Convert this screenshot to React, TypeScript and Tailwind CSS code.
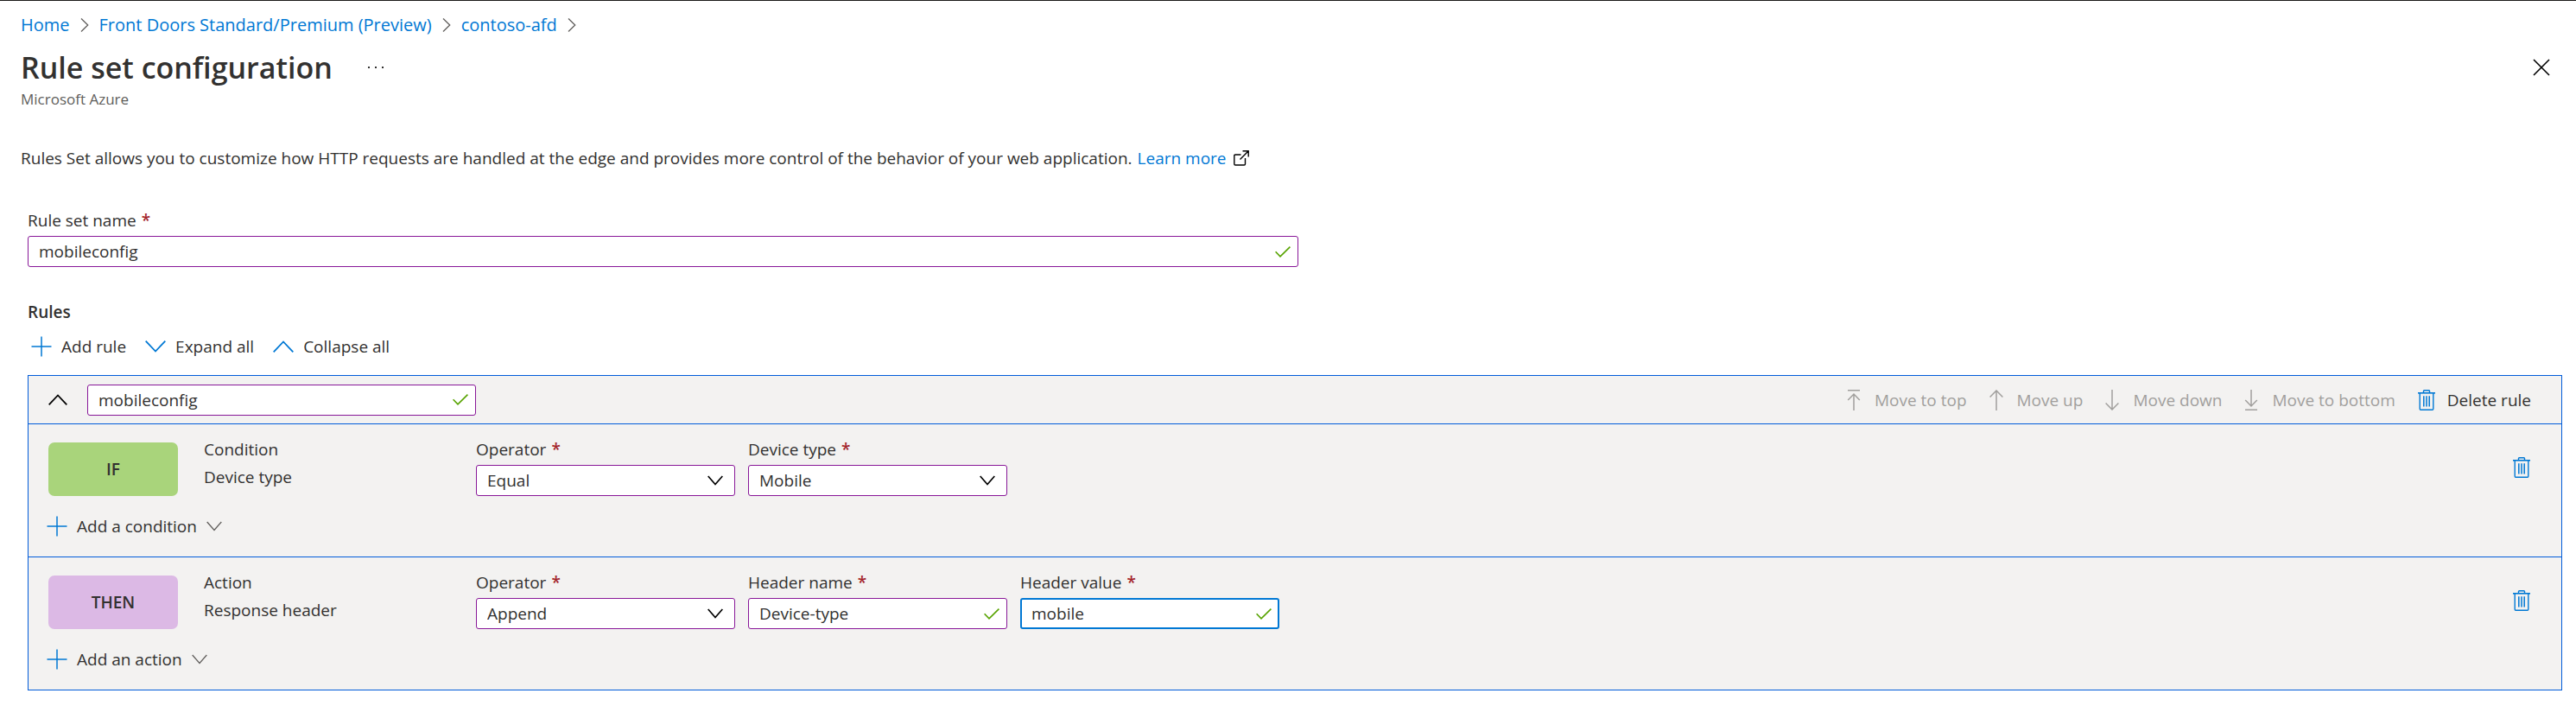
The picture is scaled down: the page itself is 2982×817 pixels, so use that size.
import React from "react";

const S = (p: { d: string; w: number; h: number; c: string; sw?: number }) => (
  <svg width={p.w} height={p.h} viewBox={`0 0 ${p.w} ${p.h}`} fill="none" className={`shrink-0 ${p.c}`} aria-hidden="true">
    <path d={p.d} stroke="currentColor" strokeWidth={p.sw ?? 1.5} />
  </svg>
);

const BLUE = "text-[#0078d4]";
const Plus = () => <S w={24} h={24} d="M12 0.5V23.5M0.5 12H23.5" c={BLUE} />;
const Down = ({ c }: { c: string }) => <S w={24} h={14} d="M0.7 0.7L12 12.5L23.3 0.7" c={c} sw={1.8} />;
const Up = ({ c }: { c: string }) => <S w={24} h={14} d="M0.7 13.3L12 1.5L23.3 13.3" c={c} sw={1.8} />;
const SmallDown = ({ c, sw }: { c: string; sw: number }) => <S w={18} h={12} d="M0.7 1L9 10.5L17.3 1" c={c} sw={sw} />;
const Crumb = () => <S w={10} h={16} d="M1 0.5L8.7 8L1 15.5" c="text-[#605e5c]" sw={1.3} />;
const Check = () => <S w={18} h={13} d="M0.6 6.3L6 11.8L17.4 0.6" c="text-[#57a300]" sw={1.6} />;
const Trash = () => (
  <svg width="20" height="24" viewBox="0 0 20 24" fill="none" className="shrink-0 text-[#0078d4]" aria-hidden="true">
    <path d="M0 3.8H20" stroke="currentColor" strokeWidth="1.6" />
    <path d="M6.5 3.5V1.6Q6.5 0.8 7.3 0.8H12.7Q13.5 0.8 13.5 1.6V3.5M2.2 4V22Q2.2 23.2 3.2 23.2H16.8Q17.8 23.2 17.8 22V4" stroke="currentColor" strokeWidth="1.4" />
    <path d="M6.8 7.3V19.5M10 7.3V19.5M13.2 7.3V19.5" stroke="currentColor" strokeWidth="1.5" />
  </svg>
);

const inputBase =
  "h-9 w-full rounded-[3px] bg-white pr-10 text-[#323130] outline-none appearance-none ";
const purple = "border border-[#881798] pl-3";

function TextField({ id, value, active, label }: { id: string; value: string; active?: boolean; label?: string }) {
  return (
    <div className="relative w-full">
      <input
        id={id}
        aria-label={label}
        defaultValue={value}
        className={inputBase + (active ? "border-2 border-[#0078d4] pl-[11px]" : purple)}
      />
      <div className="pointer-events-none absolute inset-y-0 right-[9px] flex items-center">
        <Check />
      </div>
    </div>
  );
}

function SelectField({ id, value }: { id: string; value: string }) {
  return (
    <div className="relative w-full">
      <select id={id} className={inputBase + purple}>
        <option>{value}</option>
      </select>
      <div className="pointer-events-none absolute inset-y-0 right-3.5 flex items-center">
        <SmallDown c="text-black" sw={1.7} />
      </div>
    </div>
  );
}

function Label({ htmlFor, children }: { htmlFor: string; children: React.ReactNode }) {
  return (
    <label htmlFor={htmlFor} className="flex items-start gap-1.5 leading-6">
      {children}
      <span className="font-semibold text-[#a4262c]">*</span>
    </label>
  );
}

type F = { id: string; label: string; value: string; kind: "select" | "text"; active?: boolean };

function Clause(p: { tag: string; color: string; kind: string; name: string; fields: F[]; add: string }) {
  return (
    <section className="flex flex-col gap-[21px] border-t border-[#015cda] pr-9 pb-[21px] pl-[23px] pt-[17px]">
      <div className="flex items-start">
        <div className={"mt-1 flex h-[62px] w-[150px] items-center justify-center rounded-[7px] font-semibold " + p.color}>
          {p.tag}
        </div>
        <div className="ml-[30px] flex w-[315px] flex-col gap-2 leading-6">
          <div>{p.kind}</div>
          <div>{p.name}</div>
        </div>
        <div className="flex gap-[15px]">
          {p.fields.map((f) => (
            <div key={f.id} className="flex w-[300px] flex-col gap-1.5">
              <Label htmlFor={f.id}>{f.label}</Label>
              {f.kind === "select" ? (
                <SelectField id={f.id} value={f.value} />
              ) : (
                <TextField id={f.id} value={f.value} active={f.active} />
              )}
            </div>
          ))}
        </div>
        <button aria-label={"Delete " + p.kind} className="mt-[21px] ml-auto">
          <Trash />
        </button>
      </div>
      <button className="-ml-0.5 flex h-[28px] items-center gap-[11px] self-start">
        <Plus />
        <span>{p.add}</span>
        <SmallDown c="text-[#605e5c]" sw={1.3} />
      </button>
    </section>
  );
}

const moves = [
  { t: "Move to top", d: "M1 0.8H15M8 24V5.5M1.2 12L8 5L14.8 12" },
  { t: "Move up", d: "M8 24V1.5M0.6 8.5L8 1L15.4 8.5" },
  { t: "Move down", d: "M8 0V22.5M0.6 15.5L8 23L15.4 15.5" },
  { t: "Move to bottom", d: "M1 23.2H15M8 0V18.5M1.2 12L8 19L14.8 12" },
];

export default function App() {
  return (
    <div className="min-h-screen border-t border-[#1b1a19] bg-white font-['Open_Sans','Noto_Sans',sans-serif] text-[19px] leading-6 text-[#323130]">
      <header className="px-6 pt-4">
        <nav aria-label="Breadcrumb" className="flex items-center gap-3 text-[20px] text-[#0078d4]">
          <a href="#home">Home</a>
          <Crumb />
          <a href="#front-doors">Front Doors Standard/Premium (Preview)</a>
          <Crumb />
          <a href="#contoso-afd">contoso-afd</a>
          <Crumb />
        </nav>
        <div className="mt-3 flex h-[50px] items-center">
          <h1 className="text-[34px] leading-[50px] font-semibold">Rule set configuration</h1>
          <button aria-label="More" className="ml-10">
            <svg width="20" height="4" viewBox="0 0 20 4" fill="#323130" aria-hidden="true">
              <rect x="1" y="1" width="2" height="2" />
              <rect x="9" y="1" width="2" height="2" />
              <rect x="17" y="1" width="2" height="2" />
            </svg>
          </button>
          <button aria-label="Close" className="mr-1.5 ml-auto">
            <S w={20} h={20} d="M1 1L19 19M19 1L1 19" c="text-black" sw={1.6} />
          </button>
        </div>
        <p className="text-[17px] text-[#605e5c]">Microsoft Azure</p>
      </header>

      <main className="pt-11">
        <p className="flex items-center px-6">
          Rules Set allows you to customize how HTTP requests are handled at the edge and provides more control of the
          behavior of your web application.
          <a href="#learn-more" className="ml-1.5 flex items-center gap-2 text-[#0078d4]">
            Learn more
            <S
              w={18}
              h={18}
              d="M8.5 5H2Q0.8 5 0.8 6.2V15.8Q0.8 17 2 17H12.3Q13.5 17 13.5 15.8V9M10.5 0.8H17.2V7.5M17.2 0.8L7.5 10.5"
              c="text-black"
              sw={1.4}
            />
          </a>
        </p>

        <div className="pr-4 pl-8">
          <div className="mt-12 flex w-[1471px] max-w-full flex-col gap-1.5">
            <Label htmlFor="rule-set-name">Rule set name</Label>
            <TextField id="rule-set-name" value="mobileconfig" />
          </div>

          <h2 className="mt-10 font-semibold">Rules</h2>
          <div className="mt-4 flex items-center gap-[22px] pl-1">
            <button className="flex items-center gap-[11px]">
              <Plus />
              Add rule
            </button>
            <button className="flex items-center gap-[11px]">
              <Down c={BLUE} />
              Expand all
            </button>
            <button className="flex items-center gap-[11px]">
              <Up c={BLUE} />
              Collapse all
            </button>
          </div>

          <article className="mt-[21px] border border-[#015cda] bg-[#f3f2f1]">
            <div className="flex h-[55px] items-center pr-[35px]">
              <button aria-label="Collapse rule" className="mr-[23px] ml-[23px]">
                <S w={22} h={13} d="M0.7 12.3L11 1.5L21.3 12.3" c="text-black" sw={1.8} />
              </button>
              <div className="w-[450px]">
                <TextField id="rule-name" label="Rule name" value="mobileconfig" />
              </div>
              <div className="ml-auto flex items-center gap-[26px]">
                {moves.map((m) => (
                  <button key={m.t} disabled className="flex items-center gap-4 text-[#a19f9d]">
                    <S w={16} h={24} d={m.d} c="" sw={1.5} />
                    {m.t}
                  </button>
                ))}
                <button className="flex items-center gap-3.5">
                  <Trash />
                  Delete rule
                </button>
              </div>
            </div>
            <Clause
              tag="IF"
              color="bg-[#a9d47b]"
              kind="Condition"
              name="Device type"
              add="Add a condition"
              fields={[
                { id: "if-op", label: "Operator", value: "Equal", kind: "select" },
                { id: "if-device", label: "Device type", value: "Mobile", kind: "select" },
              ]}
            />
            <Clause
              tag="THEN"
              color="bg-[#dcb9e5]"
              kind="Action"
              name="Response header"
              add="Add an action"
              fields={[
                { id: "then-op", label: "Operator", value: "Append", kind: "select" },
                { id: "then-name", label: "Header name", value: "Device-type", kind: "text" },
                { id: "then-value", label: "Header value", value: "mobile", kind: "text", active: true },
              ]}
            />
          </article>
        </div>
      </main>
    </div>
  );
}
